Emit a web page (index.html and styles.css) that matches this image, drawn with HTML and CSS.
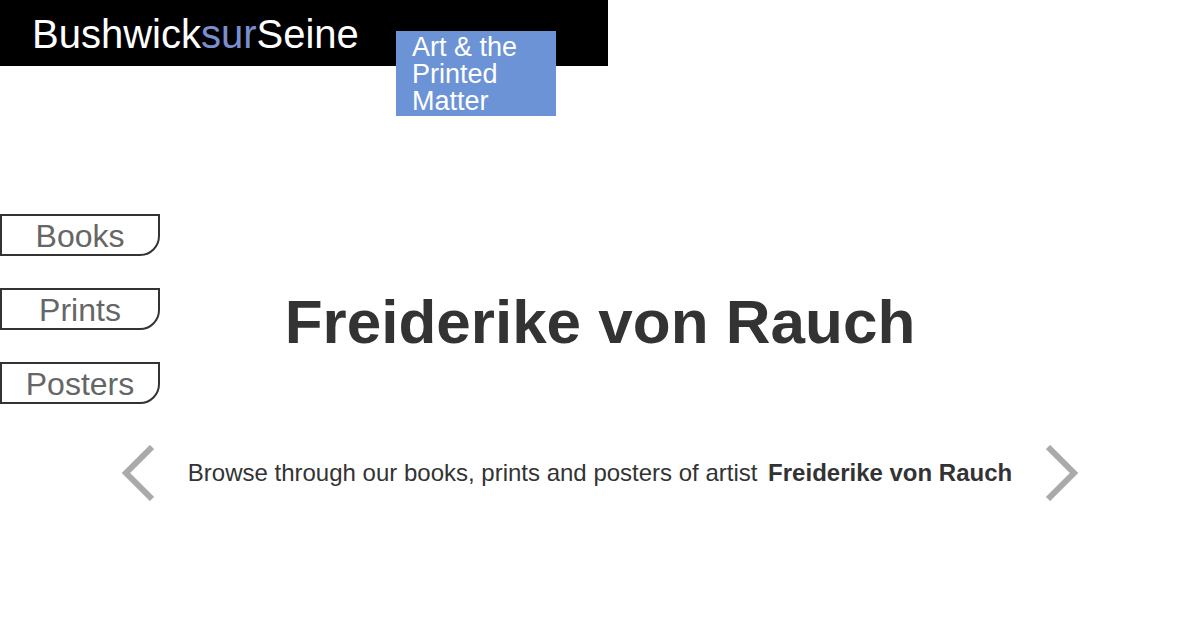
FILE: index.html
```html
<!DOCTYPE html>
<html lang="en">
<head>
<meta charset="utf-8">
<meta name="viewport" content="width=device-width, initial-scale=1">
<title>Bushwick sur Seine – Freiderike von Rauch</title>
<link rel="stylesheet" href="styles.css">
</head>
<body>
<header class="site-header">
  <a class="brand" href="#">Bushwick<span class="brand-accent">sur</span>Seine</a>
  <p class="tagline">Art &amp; the Printed Matter</p>
</header>
<div class="page">
  <main class="artist">
    <h1 class="artist-name">Freiderike von Rauch</h1>
    <div class="browse">
      <button class="arrow" type="button" aria-label="Previous artist">
        <svg width="32" height="56" viewBox="0 0 32 56" fill="none" stroke="currentColor" stroke-width="6"><path d="M30 2 4 28 30 54"/></svg>
      </button>
      <p class="browse-text">Browse through our books, prints and posters of artist <strong class="browse-name">Freiderike von Rauch</strong></p>
      <button class="arrow" type="button" aria-label="Next artist">
        <svg width="32" height="56" viewBox="0 0 32 56" fill="none" stroke="currentColor" stroke-width="6"><path d="M2 2 28 28 2 54"/></svg>
      </button>
    </div>
  </main>
  <nav class="categories" aria-label="Categories">
    <a class="category" href="#">Books</a>
    <a class="category" href="#">Prints</a>
    <a class="category" href="#">Posters</a>
  </nav>
</div>
</body>
</html>
```
FILE: styles.css
```css
* {
  box-sizing: border-box;
}

body {
  margin: 0;
  background: #fff;
  color: #333;
  font-family: "Liberation Sans", Arial, sans-serif;
}

.site-header {
  position: relative;
  display: flex;
  width: calc(50% + 8px);
  padding: 11px 32px 9px;
  background: #000;
}

.brand {
  color: #fff;
  font-size: 40px;
  line-height: 46px;
  text-decoration: none;
}

.brand-accent {
  color: #7a8fd0;
}

.tagline {
  position: absolute;
  top: 31px;
  left: 396px;
  width: 160px;
  margin: 0;
  padding: 3px 16px 1px;
  background: #6b93d6;
  color: #fff;
  font-size: 27px;
  line-height: 27px;
}

.page {
  display: grid;
  grid-template-columns: 1fr;
  padding-top: 148px;
}

.categories {
  display: grid;
  grid-area: 1 / 1;
  align-self: start;
  justify-self: start;
  gap: 32px;
  width: 160px;
}

.category {
  padding-top: 2px;
  border: 2px solid #333;
  border-bottom-right-radius: 20px;
  background: #fff;
  color: #666;
  font-size: 32px;
  line-height: 36px;
  text-align: center;
  text-decoration: none;
}

.artist {
  grid-area: 1 / 1;
  padding-top: 71px;
  text-align: center;
}

.artist-name {
  margin: 0;
  font-size: 62px;
  line-height: 74px;
}

.browse {
  display: flex;
  justify-content: center;
  align-items: center;
  gap: 34px;
  margin-top: 86px;
}

.browse-text {
  margin: 0;
  font-size: 24px;
  line-height: 28px;
}

.browse-name {
  margin-left: 4px;
}

.arrow {
  display: block;
  padding: 0;
  border: 0;
  background: none;
  color: #aaa;
  cursor: pointer;
}

.arrow svg {
  display: block;
}
```
